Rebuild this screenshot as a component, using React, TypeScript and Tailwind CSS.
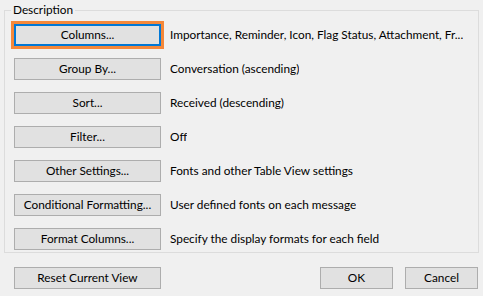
const rows = [
  { label: 'Columns...', value: 'Importance, Reminder, Icon, Flag Status, Attachment, Fr...', focused: true },
  { label: 'Group By...', value: 'Conversation (ascending)' },
  { label: 'Sort...', value: 'Received (descending)' },
  { label: 'Filter...', value: 'Off' },
  { label: 'Other Settings...', value: 'Fonts and other Table View settings' },
  { label: 'Conditional Formatting...', value: 'User defined fonts on each message' },
  { label: 'Format Columns...', value: 'Specify the display formats for each field' },
]

function Btn({ label, focused, w = 'w-[147px]' }: { label: string; focused?: boolean; w?: string }) {
  return (
    <button
      className={
        'shrink-0 h-[22px] bg-[#e1e1e1] text-black text-center leading-none ' +
        w +
        (focused
          ? ' border-2 border-[#0078d7] outline-[3px] outline-solid outline-[#f5883a]'
          : ' border border-[#adadad]')
      }
    >
      {label}
    </button>
  )
}

export default function App() {
  return (
    <div
      className="w-[483px] h-[296px] bg-[#f0f0f0] text-[11.8px] text-black overflow-hidden pt-[2px]"
      style={{ fontFamily: 'Lato, "Noto Sans", sans-serif' }}
    >
      <fieldset className="min-w-0 ml-[4px] mr-[4px] border border-[#dcdcdc] pl-[9px] pt-[6px] pb-[2px]">
        <legend className="-ml-[3px] px-[2px] leading-4">Description</legend>
        <div className="flex flex-col gap-[12px]">
          {rows.map((r) => (
            <div key={r.label} className="flex items-center gap-[9px]">
              <Btn label={r.label} focused={r.focused} />
              <span className="whitespace-nowrap overflow-hidden">{r.value}</span>
            </div>
          ))}
        </div>
      </fieldset>
      <div className="flex items-center justify-between pl-[14px] pr-[5px] mt-[14px]">
        <Btn label="Reset Current View" />
        <div className="flex gap-[12px]">
          <Btn label="OK" w="w-[73px]" />
          <Btn label="Cancel" w="w-[73px]" />
        </div>
      </div>
    </div>
  )
}
